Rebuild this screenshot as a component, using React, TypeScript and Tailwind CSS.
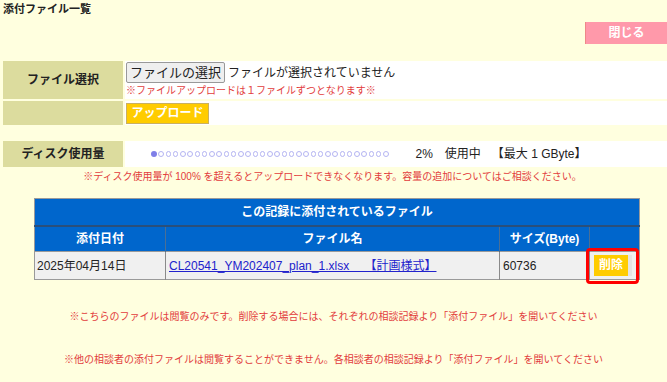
import React from "react";

const font = { fontFamily: '"Liberation Sans", "Noto Sans CJK JP", sans-serif' };

export default function App() {
  const dots = Array.from({ length: 33 }, (_, i) => i);
  return (
    <div
      className="w-full min-h-[382px] bg-[#ffffdf] text-[#222] overflow-hidden"
      style={font}
    >
      <div className="pl-[3px] pt-[2px] h-[18px] text-[11px] font-bold leading-[14px] text-[#222]">
        添付ファイル一覧
      </div>
      <div className="flex justify-end h-[22px] mt-[4px]">
        <button className="w-[82px] h-[22px] bg-[#ff99aa] text-white text-[12px] font-bold leading-[22px] border-l border-[#e88]">
          閉じる
        </button>
      </div>

      {/* file select */}
      <div className="mt-[17px] ml-[3px] grid grid-cols-[120px_1fr] gap-[2px]">
        <div className="h-[38px] bg-[#dcdc9e] flex items-center justify-center text-[12px] font-bold text-[#222]">
          ファイル選択
        </div>
        <div className="h-[38px] bg-white flex flex-col pl-[1px] pt-[1px]">
          <div className="flex items-center">
            <div className="h-[21px] px-[3px] bg-[#efefef] border border-[#999] rounded-[2px] text-[13px] leading-[19px] text-[#222]">
              ファイルの選択
            </div>
            <span className="ml-[3px] text-[12px] leading-[20px] text-[#222]">
              ファイルが選択されていません
            </span>
          </div>
          <div className="text-[10px] leading-[14px] text-[#e23c3c] mt-[1px]">
            ※ファイルアップロードは１ファイルずつとなります※
          </div>
        </div>
        <div className="h-[24px] bg-[#dcdc9e]" />
        <div className="h-[24px] bg-white flex items-center pl-[1px]">
          <div className="w-[83px] h-[21px] bg-[#ffcc00] border border-[#c9b060] text-white text-[12px] font-bold leading-[19px] text-center">
            アップロード
          </div>
        </div>
      </div>

      {/* disk usage */}
      <div className="mt-[16px] ml-[3px] grid grid-cols-[120px_1fr] gap-[2px]">
        <div className="h-[26px] bg-[#dcdc9e] flex items-center justify-center text-[12px] font-bold text-[#222]">
          ディスク使用量
        </div>
        <div className="h-[26px] bg-white flex items-center pl-[26px] text-[12px] text-[#222]">
          <div className="flex items-center gap-[1.75px]">
            {dots.map((i) =>
              i === 0 ? (
                <span key={i} className="w-[5.5px] h-[5.5px] rounded-full bg-[#7f7fe8]" />
              ) : (
                <span key={i} className="w-[5.5px] h-[5.5px] rounded-full border border-[#b4b4f2]" />
              )
            )}
          </div>
          <span className="ml-[27px]">2%</span>
          <span className="ml-[12px]">使用中</span>
          <span className="ml-[11px]">【最大 1 GByte】</span>
        </div>
      </div>
      <div className="mt-[3px] text-center text-[10px] leading-[14px] text-[#e23c3c] pr-[2px]">
        ※ディスク使用量が 100% を超えるとアップロードできなくなります。容量の追加についてはご相談ください。
      </div>

      {/* table */}
      <div className="mt-[14px] ml-[34px] w-[605px]">
        <table className="w-[605px] border-collapse border border-[#9a9a9a] text-[12px] table-fixed">
          <colgroup>
            <col className="w-[131px]" />
            <col className="w-[334px]" />
            <col className="w-[90px]" />
            <col className="w-[50px]" />
          </colgroup>
          <thead>
            <tr className="h-[27px] bg-[#0066cc] border-b-2 border-[#2a4f7a]">
              <th colSpan={4} className="text-white font-bold text-center text-[12px]">
                この記録に添付されているファイル
              </th>
            </tr>
            <tr className="h-[26px] bg-[#0066cc]">
              <th className="text-white font-bold text-center border-r border-[#4a6f95]">添付日付</th>
              <th className="text-white font-bold text-center border-r border-[#4a6f95]">ファイル名</th>
              <th className="text-white font-bold text-center border-r border-[#4a6f95]">サイズ(Byte)</th>
              <th className="" />
            </tr>
          </thead>
          <tbody>
            <tr className="h-[28px] bg-[#f0f0f0] border-t border-[#9a9a9a]">
              <td className="pl-[2px] border-r border-[#8a8a8a] text-[#222]">2025年04月14日</td>
              <td className="pl-[3px] border-r border-[#8a8a8a]">
                <span className="text-[#2222cc] underline whitespace-pre">
                  {"CL20541_YM202407_plan_1.xlsx　 【計画様式】"}
                </span>
              </td>
              <td className="pl-[3px] border-r border-[#8a8a8a] text-[#222]">60736</td>
              <td className="relative">
                <div className="flex items-center pl-[4px]">
                  <div className="w-[34px] h-[21px] bg-[#ffcc00] border-r-[4px] border-[#e4e4e4] box-content text-white font-bold text-[12px] leading-[21px] text-center">
                    削除
                  </div>
                </div>
                <div className="absolute -left-[4px] -top-[4px] right-0 -bottom-[5px] border-[3px] border-[#ff0000] rounded-[4px]" />
              </td>
            </tr>
          </tbody>
        </table>
      </div>

      <div className="mt-[30px] text-center text-[10px] leading-[14px] text-[#e23c3c]">
        ※こちらのファイルは閲覧のみです。削除する場合には、それぞれの相談記録より「添付ファイル」を開いてください
      </div>
      <div className="mt-[29px] text-center text-[10px] leading-[14px] text-[#e23c3c]">
        ※他の相談者の添付ファイルは閲覧することができません。各相談者の相談記録より「添付ファイル」を開いてください
      </div>
    </div>
  );
}
